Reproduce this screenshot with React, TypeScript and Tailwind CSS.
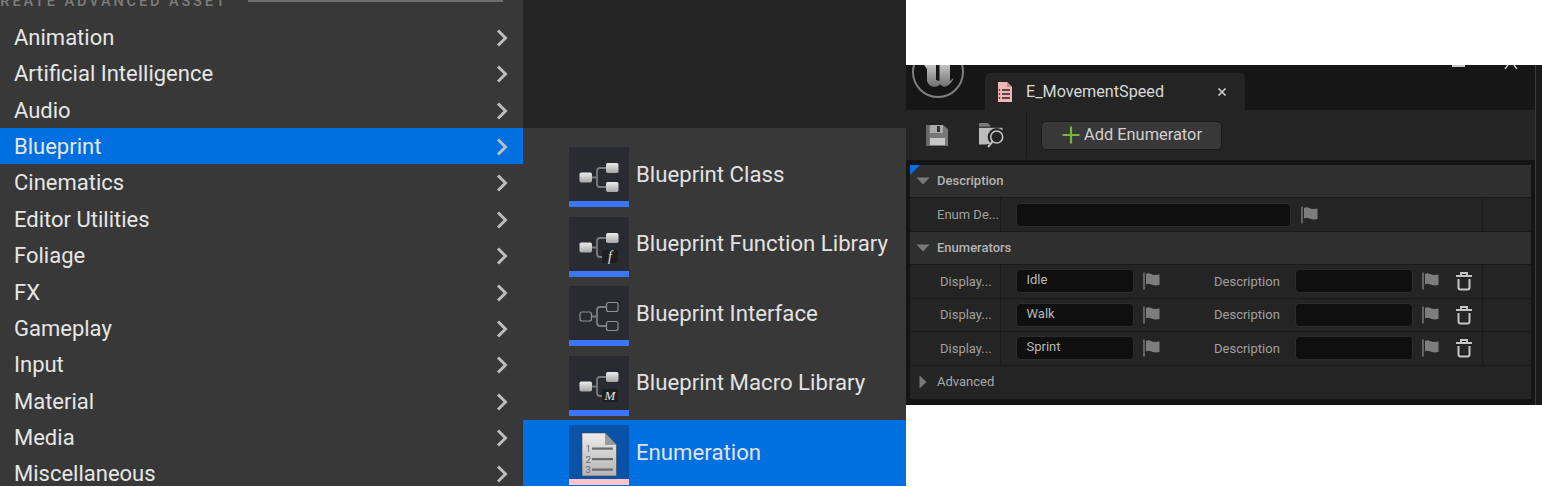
import React from "react";

const menuItems = ["Animation","Artificial Intelligence","Audio","Blueprint","Cinematics","Editor Utilities","Foliage","FX","Gameplay","Input","Material","Media","Miscellaneous"];

function Chevron() {
  return (
    <svg width="14" height="20" viewBox="0 0 14 20" className="mt-[1px] shrink-0">
      <path d="M3 2.5 L10.5 10 L3 17.5" fill="none" stroke="#bdbdbd" strokeWidth="3" />
    </svg>
  );
}

function Node({ x, y, hollow }: { x: number; y: number; hollow?: boolean }) {
  return hollow ? (
    <rect x={x + 0.5} y={y + 0.5} width="11.5" height="9" rx="2" fill="none" stroke="#8f8f8f" strokeWidth="1.2" />
  ) : (
    <rect x={x} y={y} width="12.5" height="10" rx="1.8" fill="url(#nodeGrad)" />
  );
}

function BlueprintIcon({ kind }: { kind: "class" | "fn" | "iface" | "macro" }) {
  const hollow = kind === "iface";
  const full = kind === "class" || kind === "iface";
  return (
    <svg width="60" height="54" viewBox="0 0 60 54">
      <defs>
        <linearGradient id="nodeGrad" x1="0" y1="0" x2="0" y2="1">
          <stop offset="0" stopColor="#ececec" />
          <stop offset="1" stopColor="#a6a6a6" />
        </linearGradient>
      </defs>
      <path d={full ? "M23 30.5H27M37 21H31Q28 21 28 24V37Q28 40 31 40H37" : "M23 30.5H27M37 21H31Q28 21 28 24V37Q28 40 31 40H34"} fill="none" stroke="#7c7c7c" strokeWidth="1.8" />
      <Node x={10.5} y={25.5} hollow={hollow} />
      <Node x={37} y={16} hollow={hollow} />
      {full ? (
        <Node x={37} y={35} hollow={hollow} />
      ) : (
        <>
          <rect x="33" y="33" width="16" height="13" rx="2" fill="#1e1e1f" />
          <text x="41" y="44" textAnchor="middle" fontFamily="'Liberation Serif', serif" fontStyle="italic" fontSize={kind === "fn" ? 14 : 13} fontWeight="400" fill="#e4e4e4">
            {kind === "fn" ? "f" : "M"}
          </text>
        </>
      )}
    </svg>
  );
}

function EnumIcon() {
  return (
    <svg width="60" height="54" viewBox="0 0 60 54">
      <defs>
        <linearGradient id="docGrad" x1="0" y1="0" x2="0" y2="1">
          <stop offset="0" stopColor="#ececec" />
          <stop offset="1" stopColor="#b4b4b4" />
        </linearGradient>
      </defs>
      <path d="M13 8H36L47.5 20V51H13Z" fill="url(#docGrad)" stroke="#3c4a5c" strokeWidth="0.6" />
      <path d="M36 8L47.5 20H36Z" fill="#9a9a9a" />
      {[23.5, 34, 44.5].map((y, i) => (
        <g key={y}>
          <text x="16.5" y={y + 3.5} fontFamily="Roboto, sans-serif" fontSize="9.5" fill="#6a6a6a">{i + 1}</text>
          <rect x="23" y={y - 1} width="21" height="2.2" fill="#6a6a6a" />
        </g>
      ))}
    </svg>
  );
}

function Flag() {
  return (
    <svg width="18" height="18" viewBox="0 0 18 18" className="shrink-0">
      <rect x="0.5" y="0.5" width="1" height="17" fill="#a0a0a0" />
      <path d="M3 2Q5 0.5 8 2Q11 3.5 16.5 2.5V13Q12 14 8.5 12.5Q5 11 3 12.5Z" fill="#7d7d7d" />
    </svg>
  );
}

function Trash() {
  return (
    <svg width="18" height="20" viewBox="0 0 18 20" className="shrink-0">
      <path d="M1 5H17M6 4V2H12V4" fill="none" stroke="#c4c4c4" strokeWidth="2" />
      <path d="M3.5 8V16.5Q3.5 18.5 5.5 18.5H12.5Q14.5 18.5 14.5 16.5V8" fill="none" stroke="#c4c4c4" strokeWidth="2" />
    </svg>
  );
}

function Field({ width, children }: { width: string; children?: React.ReactNode }) {
  return (
    <div className={`${width} h-[24px] shrink-0 rounded-[4px] bg-[#0f0f0f] border border-[#2b2b2b] pl-[9.5px] text-[13px] leading-[20px] text-[#b8b8b8]`}>
      {children}
    </div>
  );
}

function SectionHeader({ title, marker }: { title: string; marker?: boolean }) {
  return (
    <div className="relative flex h-[33px] items-center bg-[#2f2f2f] border-b border-[#1a1a1a] pl-[6px]">
      {marker && (
        <svg width="10" height="10" viewBox="0 0 10 10" className="absolute left-0 top-0">
          <path d="M0 0H10L0 10Z" fill="#0070e0" />
        </svg>
      )}
      <svg width="14" height="8" viewBox="0 0 14 8" className="shrink-0">
        <path d="M0.5 0.5H13.5L7 7.5Z" fill="#7a7a7a" />
      </svg>
      <span className="ml-[7px] text-[13px] font-medium text-[#b4b4b4]">{title}</span>
    </div>
  );
}

function EnumRow({ value }: { value: string }) {
  return (
    <div className="flex h-[33.5px] items-center border-b border-[#1a1a1a] bg-[#242424]">
      <div className="flex h-full w-[91px] shrink-0 items-center border-r border-[#1a1a1a] pl-[30px] text-[13px] text-[#a0a0a0]">Display...</div>
      <div className="flex h-full w-[482px] shrink-0 items-center border-r border-[#1a1a1a] pl-[15px]">
        <Field width="w-[118px]">{value}</Field>
        <div className="ml-[9px]"><Flag /></div>
        <span className="ml-[53px] text-[13px] text-[#a0a0a0]">Description</span>
        <div className="ml-[15px]"><Field width="w-[118px]" /></div>
        <div className="ml-[9px]"><Flag /></div>
        <div className="ml-[15px]"><Trash /></div>
      </div>
    </div>
  );
}

export default function App() {
  return (
    <div className="flex h-[487px] w-[1542px] overflow-hidden bg-white font-['Roboto',sans-serif]">
      <div className="h-[486px] w-[523px] shrink-0 overflow-hidden bg-[#383838]">
        <div className="flex h-[18.6px] items-start">
          <span className="-mt-[9px] -ml-[12px] whitespace-nowrap text-[14.5px] font-medium tracking-[2.9px] text-[#7d7d7d]">CREATE ADVANCED ASSET</span>
          <div className="ml-[20px] h-[1.5px] w-[255px] bg-[#6e6e6e]" />
        </div>
        {menuItems.map((m) => (
          <div key={m} className={`flex h-[36.4px] items-center justify-between pl-[14px] pr-[14px] pt-[1px] text-[22px] text-[#e6e6e6] ${m === "Blueprint" ? "bg-[#0070e0]" : ""}`}>
            <span>{m}</span>
            <Chevron />
          </div>
        ))}
      </div>

      <div className="flex h-[486px] w-[383px] shrink-0 flex-col text-[22.2px] text-[#e2e2e2]">
        <div className="h-[128px] bg-[#242424]" />
        <div className="flex-1 overflow-hidden bg-[#383838] pt-[13.5px]">
          {([
            ["Blueprint Class", "class"],
            ["Blueprint Function Library", "fn"],
            ["Blueprint Interface", "iface"],
            ["Blueprint Macro Library", "macro"],
          ] as const).map(([label, kind]) => (
            <div key={label} className="flex h-[69.5px] pt-[5.5px] pl-[46px]">
              <div className="h-[60px] w-[60px] shrink-0 border-b-[6px] border-[#3b76f6] bg-[#2a2b30]">
                <BlueprintIcon kind={kind} />
              </div>
              <div className="flex h-[54px] items-center pl-[7px] pt-[1px] whitespace-nowrap">{label}</div>
            </div>
          ))}
          <div className="flex h-[67px] bg-[#0070e0] pt-[5.5px] pl-[46px]">
            <div className="h-[60px] w-[60px] shrink-0 border-b-[6px] border-[#ffc4c4] bg-[#0a52a8]">
              <EnumIcon />
            </div>
            <div className="flex h-[54px] items-center pl-[7px] pt-[1px]">Enumeration</div>
          </div>
        </div>
      </div>

      <div className="flex-1 pt-[65px]">
        <div className="flex h-[340px] overflow-hidden bg-[#141414]">
          <div className="flex w-[630px] shrink-0 flex-col border-r border-[#3a3a3a]">
            <div className="flex h-[45px] items-end overflow-hidden bg-[#161616]">
              <svg width="54" height="54" viewBox="0 0 54 54" className="mb-[11px] ml-[5px] shrink-0">
                <defs>
                  <linearGradient id="logoGrad" x1="0" y1="0" x2="0" y2="1">
                    <stop offset="0" stopColor="#c4c4c4" />
                    <stop offset="1" stopColor="#6e6e6e" />
                  </linearGradient>
                </defs>
                <circle cx="27" cy="27" r="25" fill="#151515" stroke="#7e7e7e" strokeWidth="2" />
                <path d="M13 20H25V35L28.5 36V20H39V36L42.5 33C40.5 39 36 42.5 32 41.5L29 39.5C25 43.5 18 42.5 16 36V24Z" fill="url(#logoGrad)" />
              </svg>
              <div className="ml-[20px] flex h-[37px] w-[260px] shrink-0 items-center rounded-t-[5px] bg-[#242424] pl-[12px]">
                <svg width="16" height="22" viewBox="0 0 16 22" className="shrink-0">
                  <path d="M1 1H10L15 6V21H1Z" fill="#f2b4b4" />
                  <path d="M10 1L15 6H10Z" fill="#c98c8c" />
                  <path d="M5 9H13M5 13H13M5 17H13" stroke="#2a2020" strokeWidth="1.3" />
                  <path d="M2.5 8V10M2.5 12V14M2.5 16V18" stroke="#5a3a3a" strokeWidth="1.2" />
                </svg>
                <span className="ml-[13px] pt-[2px] text-[16.2px] text-[#d8d8d8]">E_MovementSpeed</span>
                <svg width="10" height="10" viewBox="0 0 10 10" className="ml-[53px] shrink-0">
                  <path d="M1.5 1.5L8.5 8.5M8.5 1.5L1.5 8.5" stroke="#cfcfcf" strokeWidth="1.7" />
                </svg>
              </div>
              <div className="mb-[43px] ml-[207px] h-[2px] w-[13px] shrink-0 bg-[#c8c8c8]" />
              <svg width="14" height="4" viewBox="0 0 14 4" className="mb-[41px] ml-[39px] shrink-0">
                <path d="M1 4L4 0M13 4L10 0" stroke="#c8c8c8" strokeWidth="1.5" />
              </svg>
            </div>

            <div className="flex h-[50px] items-center bg-[#242424]">
              <svg width="24" height="24" viewBox="0 0 24 24" className="ml-[19px] shrink-0">
                <path d="M1 2H18L23 6V23H1Z" fill="#777777" />
                <rect x="1" y="2" width="3" height="21" fill="#686868" />
                <rect x="5" y="2" width="13" height="8" fill="#ababab" />
                <rect x="12" y="3" width="3" height="6" fill="#333333" />
                <rect x="5" y="15" width="15" height="7" fill="#c6c6c6" />
              </svg>
              <svg width="26" height="26" viewBox="0 0 26 26" className="ml-[30px] shrink-0">
                <path d="M0 5V2Q0 1 1 1H8Q10 1 12 5Z" fill="#7a7a7a" />
                <path d="M0 5.5H23.5V22.5H0Z" fill="#bcbcbc" />
                <rect x="0" y="4.6" width="24" height="1" fill="#242424" />
                <rect x="8" y="22" width="18" height="4" fill="#242424" />
                <circle cx="17.7" cy="15" r="9" fill="#242424" />
                <circle cx="17.7" cy="15" r="6" fill="none" stroke="#c0c0c0" strokeWidth="1.6" />
                <path d="M13.5 19.5L9 25" stroke="#c0c0c0" strokeWidth="2" />
              </svg>
              <div className="ml-[21px] h-[46px] w-[1px] shrink-0 bg-[#181818]" />
              <div className="ml-[14px] flex h-[29px] w-[181px] shrink-0 items-center rounded-[5px] border border-[#1a1a1a] bg-[#383838] pl-[20px]">
                <svg width="18" height="18" viewBox="0 0 18 18" className="shrink-0">
                  <path d="M9 0.5V17.5M0.5 9H17.5" stroke="#79b33a" strokeWidth="2.2" />
                </svg>
                <span className="ml-[4px] pt-[1px] text-[16.4px] text-[#d0d0d0]">Add Enumerator</span>
              </div>
            </div>

            <div className="flex-1 bg-[#141414] pt-[5px] pl-[4px] pr-[4px]">
              <SectionHeader title="Description" marker />
              <div className="flex h-[34px] items-center border-b border-[#1a1a1a] bg-[#242424]">
                <div className="flex h-full w-[91px] shrink-0 items-center border-r border-[#1a1a1a] pl-[27px] text-[13px] text-[#a0a0a0]">Enum De...</div>
                <div className="flex h-full w-[482px] shrink-0 items-center border-r border-[#1a1a1a] pl-[15px]">
                  <Field width="w-[275px]" />
                  <div className="ml-[10px]"><Flag /></div>
                </div>
              </div>
              <SectionHeader title="Enumerators" />
              <EnumRow value="Idle" />
              <EnumRow value="Walk" />
              <EnumRow value="Sprint" />
              <div className="flex h-[33px] items-center bg-[#242424] pl-[9px]">
                <svg width="8" height="14" viewBox="0 0 8 14" className="shrink-0">
                  <path d="M0.5 0.5L7.5 7L0.5 13.5Z" fill="#7a7a7a" />
                </svg>
                <span className="ml-[10px] text-[13px] text-[#a8a8a8]">Advanced</span>
              </div>
            </div>
          </div>
          <div className="flex-1 bg-[#1a1a1a]" />
        </div>
      </div>
    </div>
  );
}
